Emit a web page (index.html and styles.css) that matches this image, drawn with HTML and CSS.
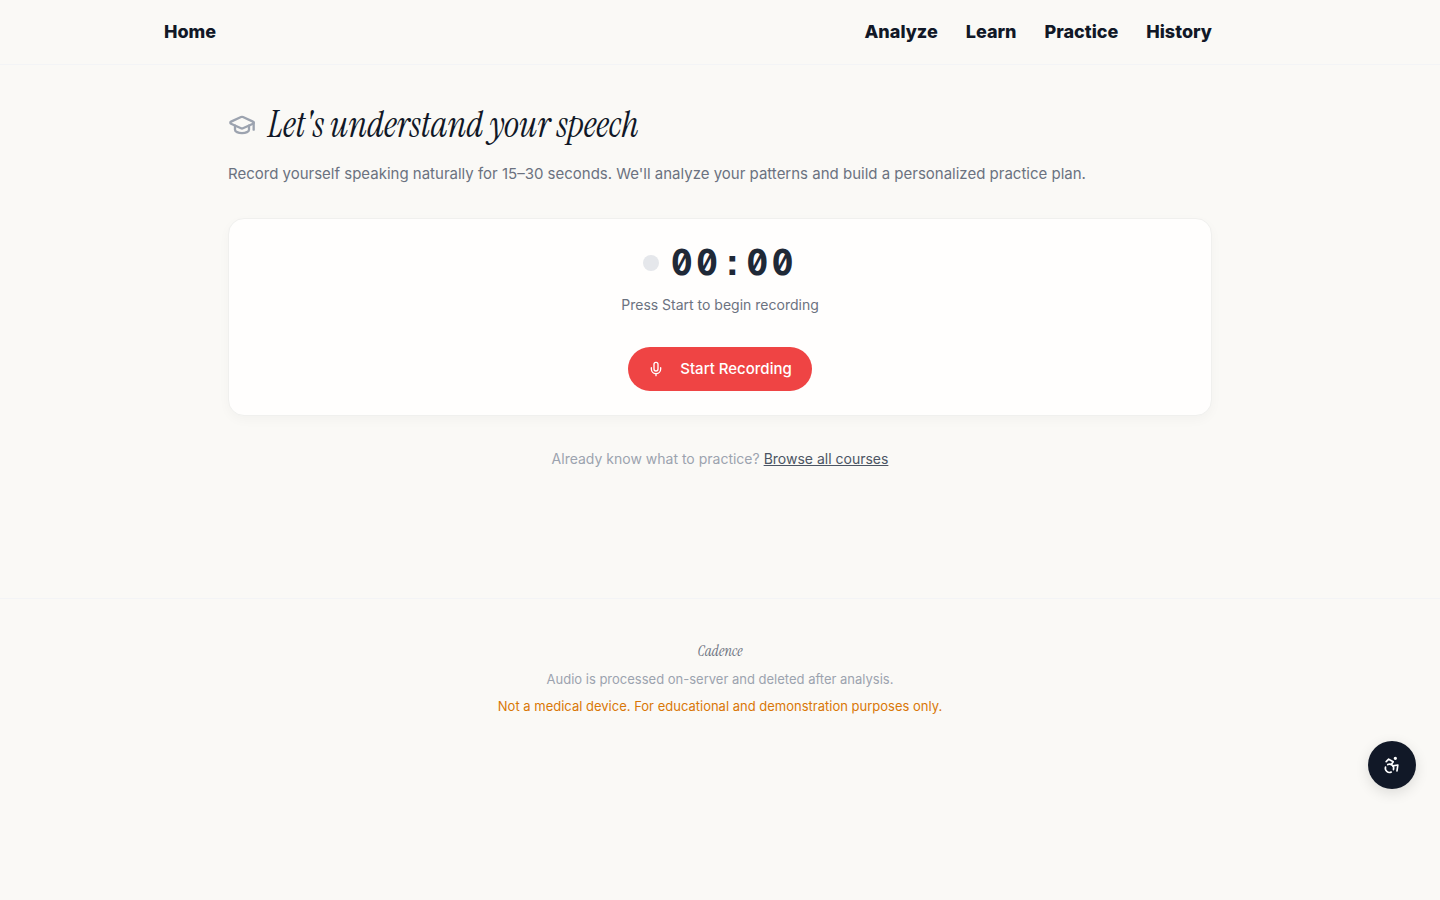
FILE: index.html
```html
<!DOCTYPE html>
<html lang="en">
<head>
<meta charset="utf-8">
<meta name="viewport" content="width=device-width, initial-scale=1">
<title>Cadence</title>
<link rel="stylesheet" href="styles.css">
</head>
<body>
<header class="site-header">
  <nav class="nav">
    <a href="#">Home</a>
    <div class="nav-links">
      <a href="#">Analyze</a>
      <a href="#">Learn</a>
      <a href="#">Practice</a>
      <a href="#">History</a>
    </div>
  </nav>
</header>
<main class="main">
  <div class="title-row">
    <svg class="cap-icon" viewBox="0 0 24 24" fill="none" stroke="currentColor" stroke-width="2" stroke-linecap="round" stroke-linejoin="round" aria-hidden="true"><path d="M21.42 10.922a1 1 0 0 0-.019-1.838L12.83 5.18a2 2 0 0 0-1.66 0L2.6 9.08a1 1 0 0 0 0 1.832l8.57 3.908a2 2 0 0 0 1.66 0z"/><path d="M22 10v6"/><path d="M6 12.5V16a6 3 0 0 0 12 0v-3.5"/></svg>
    <h1 class="title">Let's understand your speech</h1>
  </div>
  <p class="intro">Record yourself speaking naturally for 15–30 seconds. We'll analyze your patterns and build a personalized practice plan.</p>
  <section class="card">
    <div class="timer-row">
      <span class="status-dot"></span>
      <span class="timer">00:00</span>
    </div>
    <p class="hint">Press Start to begin recording</p>
    <button class="record" type="button">
      <svg class="mic-icon" viewBox="0 0 24 24" fill="none" stroke="currentColor" stroke-width="2" stroke-linecap="round" stroke-linejoin="round" aria-hidden="true"><path d="M12 2a3 3 0 0 0-3 3v7a3 3 0 0 0 6 0V5a3 3 0 0 0-3-3Z"/><path d="M19 10v2a7 7 0 0 1-14 0v-2"/><path d="M12 19v3"/></svg>
      Start Recording
    </button>
  </section>
  <p class="browse">Already know what to practice? <a href="#">Browse all courses</a></p>
</main>
<footer class="footer">
  <p class="brand">Cadence</p>
  <p class="note">Audio is processed on-server and deleted after analysis.</p>
  <p class="warning">Not a medical device. For educational and demonstration purposes only.</p>
</footer>
<button class="a11y" type="button" aria-label="Accessibility options">
  <svg class="a11y-icon" viewBox="0 0 24 24" fill="none" stroke="currentColor" stroke-width="2" stroke-linecap="round" stroke-linejoin="round" aria-hidden="true"><circle cx="16" cy="4" r="1"/><path d="m18 19 1-7-6 1"/><path d="m5 8 3-3 5.5 3-2.36 3.5"/><path d="M4.24 14.5a5 5 0 0 0 6.88 6"/><path d="M13.76 17.5a5 5 0 0 0-6.88-6"/></svg>
</button>
</body>
</html>
```
FILE: styles.css
```css
* { box-sizing: border-box; }
body {
  margin: 0;
  background: #faf9f6;
  color: #111827;
  font-family: Inter, "Liberation Sans", sans-serif;
  font-size: 16px;
  line-height: 24px;
}
p, h1 { margin: 0; }
.site-header { border-bottom: 1px solid #f3f4f6; }
.nav {
  display: flex;
  align-items: center;
  justify-content: space-between;
  max-width: 1112px;
  height: 64px;
  margin: 0 auto;
  padding-right: 64px;
}
.nav a {
  color: #111827;
  font-size: 18px;
  font-weight: 800;
  text-decoration: none;
}
.nav-links { display: flex; gap: 28px; }
.main {
  max-width: 1048px;
  margin: 0 auto;
  padding: 32px 32px 128px;
}
.title-row { display: flex; align-items: center; gap: 12px; }
.cap-icon { width: 28px; height: 28px; color: #9ca3af; flex: none; }
.title {
  font-family: "Instrument Serif", "Liberation Serif", serif;
  font-style: italic;
  font-weight: 400;
  font-size: 36px;
  line-height: 56px;
}
.intro { margin-top: 8px; color: #6b7280; font-size: 15px; line-height: 25px; }
.card {
  display: flex;
  flex-direction: column;
  align-items: center;
  margin-top: 32px;
  padding: 24px;
  background: #fffefd;
  border: 1px solid #f0f0ee;
  border-radius: 16px;
  box-shadow: 0 4px 12px rgba(0, 0, 0, 0.03);
}
.timer-row { display: flex; align-items: center; gap: 12px; }
.status-dot { width: 16px; height: 16px; border-radius: 50%; background: #e5e7eb; }
.timer {
  color: #1f2937;
  font-family: "Geist Mono", "DejaVu Sans Mono", monospace;
  font-size: 36px;
  font-weight: 700;
  line-height: 40px;
  letter-spacing: 0.1em;
}
.hint { margin-top: 12px; color: #6b7280; font-size: 14px; line-height: 20px; }
.record {
  display: flex;
  align-items: center;
  gap: 16px;
  height: 44px;
  margin-top: 32px;
  padding: 0 20px;
  border: 0;
  border-radius: 22px;
  background: #ef4444;
  color: #fff;
  font: inherit;
  font-size: 15px;
  font-weight: 500;
}
.mic-icon { width: 16px; height: 16px; }
.browse {
  margin-top: 32px;
  color: #9ca3af;
  font-size: 14px;
  line-height: 22px;
  text-align: center;
}
.browse a { color: #4b5563; }
.footer {
  padding: 41px 24px;
  border-top: 1px solid #f3f4f6;
  text-align: center;
  font-size: 13px;
  line-height: 19px;
}
.brand {
  color: #6b7280;
  font-family: "Instrument Serif", "Liberation Serif", serif;
  font-style: italic;
  font-size: 15px;
  line-height: 22px;
}
.note { margin-top: 8px; color: #9ca3af; }
.warning { margin-top: 8px; color: #d97706; }
.a11y {
  position: fixed;
  right: 24px;
  bottom: 111px;
  display: grid;
  place-items: center;
  width: 48px;
  height: 48px;
  padding: 0;
  border: 0;
  border-radius: 50%;
  background: #111827;
  color: #fff;
  box-shadow: 0 4px 14px rgba(0, 0, 0, 0.12);
}
.a11y-icon { width: 20px; height: 20px; }
```
